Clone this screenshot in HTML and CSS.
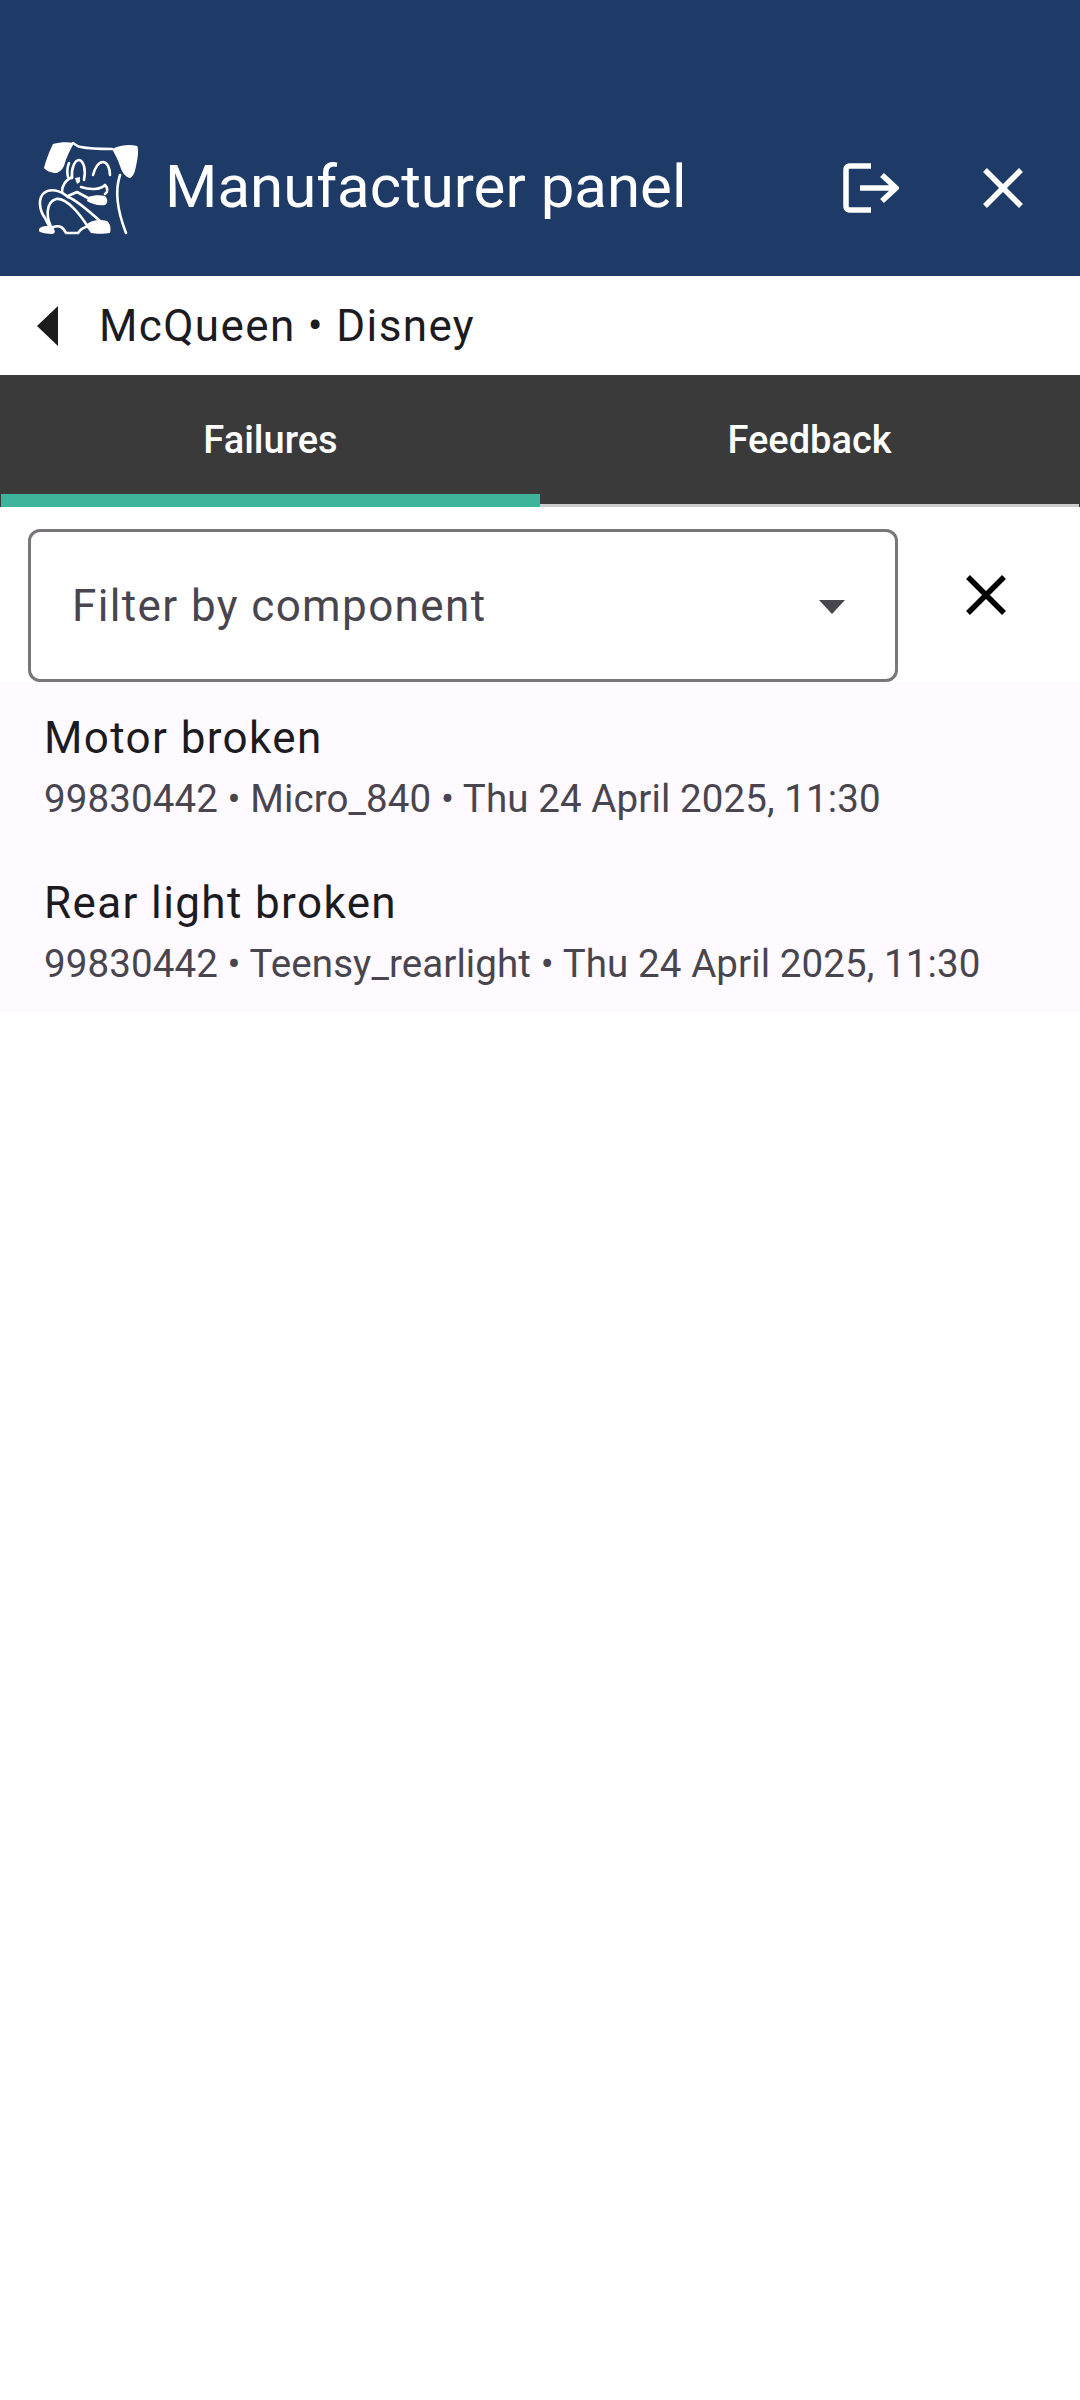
FILE: index.html
```html
<!DOCTYPE html>
<html lang="en">
<head>
<meta charset="utf-8">
<title>Manufacturer panel</title>
<link rel="stylesheet" href="styles.css">
</head>
<body>
<header class="appbar">
  <svg class="logo" viewBox="0 0 130 110" aria-hidden="true">
    <g fill="#fff">
      <path d="M33 14C40 12 48 12 54 13C50 20 46 28 44 36C42 40 39 42 37 43C32 43 26 41 24 38C26 30 30 20 33 14Z"/>
      <path d="M92 19C100 15 110 14 117 16C119 18 118 28 116 36C115 42 113 47 110 48C105 47 102 42 100 36C98 30 95 24 92 19Z"/>
      <path d="M19 99C21 96 27 95 33 97L35 102L33 104C28 104 20 103 19 101Z"/>
      <path d="M67 94C72 90 80 89 87 91C91 94 91 100 90 103C84 104 76 104 71 103C69 100 66 97 67 94Z"/>
      <path d="M68 67C74 65 80 65 85 66C88 69 88 73 85 75C78 76 72 74 67 71Z"/>
      <path d="M55 48L60 47L60 52L57 54Z"/>
    </g>
    <g fill="none" stroke="#fff" stroke-width="2.600" stroke-linecap="round" stroke-linejoin="round">
      <path d="M53 13C56 15 58 17 61 17C70 19 82 19 92 19"/>
      <path d="M100 45C95 60 97 80 106 103"/>
      <path d="M49 33C47 38 47 43 48 47"/>
      <path d="M52 48C51 38 55 30 59 30C64 31 66 40 64 50"/>
      <path d="M73 45C75 37 79 32 83 32C87 32 90 38 90 45"/>
      <path d="M52 47C46 50 42 55 42 62"/>
      <path d="M61 57C70 60 80 60 85 55C88 58 88 62 85 64"/>
      <path d="M48 67C40 60 30 58 24 63C18 68 19 80 25 88C27 92 28 95 30 97"/>
      <path d="M48 67C56 70 70 82 80 91"/>
      <path d="M33 100C25 88 26 72 36 69C46 67 60 84 68 97"/>
      <path d="M33 97C40 95 43 97 46 103L58 103C60 100 62 98 66 97"/>
      <path d="M48 66L57 62L68 68"/>
    </g>
  </svg>
  <h1 class="app-title">Manufacturer panel</h1>
  <button class="icon-btn logout" aria-label="Log out">
    <svg viewBox="0 0 56 50" aria-hidden="true">
      <path d="M28 3H6.500A3.500 3.500 0 0 0 3 6.500V43.500A3.500 3.500 0 0 0 6.500 47H28" fill="none" stroke="#fff" stroke-width="5.500"/>
      <path d="M17 25H52M39 12L53 25L39 38" fill="none" stroke="#fff" stroke-width="5.500"/>
    </svg>
  </button>
  <button class="icon-btn close" aria-label="Close">
    <svg viewBox="0 0 40 40" aria-hidden="true">
      <path d="M2 2L38 38M38 2L2 38" stroke="#fff" stroke-width="5.500"/>
    </svg>
  </button>
</header>

<nav class="crumb">
  <span class="back-arrow"></span>
  <span class="crumb-text">McQueen • Disney</span>
</nav>

<div class="tabs">
  <div class="tab active">Failures</div>
  <div class="tab">Feedback</div>
</div>

<section class="filter-row">
  <div class="select">
    <span class="select-label">Filter by component</span>
    <span class="caret"></span>
  </div>
  <button class="clear" aria-label="Clear filter">
    <svg viewBox="0 0 40 40" aria-hidden="true">
      <path d="M2 2L38 38M38 2L2 38" stroke="#000" stroke-width="5.500"/>
    </svg>
  </button>
</section>

<ul class="list">
  <li class="item">
    <div class="item-title">Motor broken</div>
    <div class="item-sub">99830442 • Micro_840 • Thu 24 April 2025, 11:30</div>
  </li>
  <li class="item">
    <div class="item-title">Rear light broken</div>
    <div class="item-sub">99830442 • Teensy_rearlight • Thu 24 April 2025, 11:30</div>
  </li>
</ul>
</body>
</html>
```

FILE: styles.css
```css
* { box-sizing: border-box; }
html, body { margin: 0; padding: 0; }
body {
  width: 1080px;
  height: 2400px;
  background: #fff;
  font-family: Roboto, "Liberation Sans", sans-serif;
  overflow: hidden;
}
button { border: 0; background: none; padding: 0; display: block; }
svg { display: block; }

.appbar {
  height: 276px;
  background: #1e3a66;
  display: flex;
  align-items: flex-start;
  padding: 130px 0 0 20px;
}
.logo { width: 130px; height: 110px; flex: none; }
.app-title {
  margin: 2px 0 0 15px;
  width: 678px;
  font-size: 60px;
  line-height: 110px;
  font-weight: 400;
  color: #fff;
  white-space: nowrap;
}
.icon-btn { flex: none; }
.logout { width: 56px; height: 50px; margin-top: 33px; }
.logout svg { width: 56px; height: 50px; }
.close { width: 40px; height: 40px; margin: 38px 0 0 84px; }
.close svg { width: 40px; height: 40px; }

.crumb {
  height: 99px;
  display: flex;
  align-items: center;
  padding-left: 37px;
}
.back-arrow {
  width: 0; height: 0;
  border-style: solid;
  border-width: 20px 21px 20px 0;
  border-color: transparent #1c1c1c transparent transparent;
}
.crumb-text {
  margin-left: 41px;
  font-size: 44px;
  letter-spacing: 1.375px;
  color: #1c1b1f;
}

.tabs {
  height: 132px;
  display: flex;
  background: #3a3a3a;
  padding: 0 1px;
}
.tab {
  flex: 1;
  height: 132px;
  padding-top: 37px;
  line-height: 56px;
  text-align: center;
  color: #fff;
  font-size: 38px;
  font-weight: 500;
  border-bottom: 3px solid #ccc;
}
.tab.active { border-bottom: 13px solid #3eb49b; }

.filter-row {
  display: flex;
  align-items: flex-start;
  padding: 22px 0 0 28px;
  height: 175px;
}
.select {
  width: 870px;
  height: 153px;
  border: 3px solid #79767a;
  border-radius: 12px;
  display: flex;
  align-items: center;
  justify-content: space-between;
  padding: 0 50px 0 41px;
}
.select-label {
  font-size: 44px;
  letter-spacing: 1.375px;
  color: #49454f;
}
.caret {
  width: 0; height: 0;
  margin-top: 2px;
  border-style: solid;
  border-width: 14px 13px 0 13px;
  border-color: #49454f transparent transparent transparent;
}
.clear { width: 40px; height: 40px; margin: 46px 0 0 68px; }
.clear svg { width: 40px; height: 40px; }

.list {
  list-style: none;
  margin: 0;
  padding: 0;
  background: #fefaff;
}
.item { height: 165px; padding: 28px 44px 0; }
.item + .item { height: 165px; }
.item-title {
  font-size: 44px;
  line-height: 56px;
  letter-spacing: 1.375px;
  color: #1c1b1f;
}
.item-sub {
  margin-top: 8px;
  font-size: 38.500px;
  line-height: 50px;
  letter-spacing: 0.100px;
  color: #49454f;
  white-space: nowrap;
}
```
